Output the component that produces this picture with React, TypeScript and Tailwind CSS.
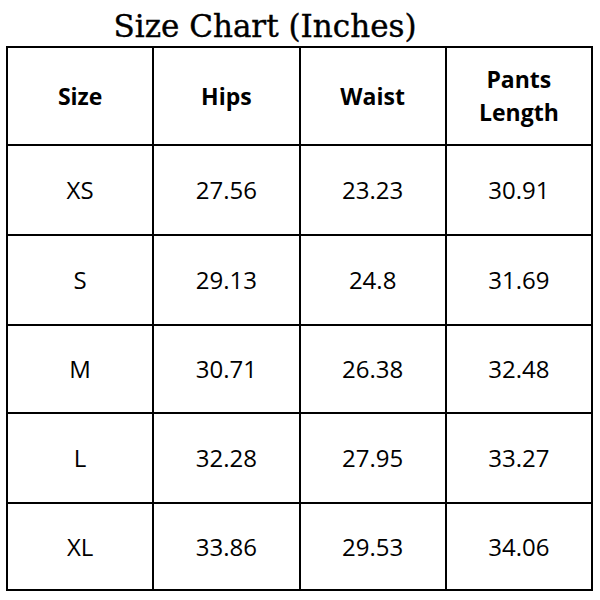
import React from "react";

const rows = [
  ["XS", "27.56", "23.23", "30.91"],
  ["S", "29.13", "24.8", "31.69"],
  ["M", "30.71", "26.38", "32.48"],
  ["L", "32.28", "27.95", "33.27"],
  ["XL", "33.86", "29.53", "34.06"],
];

const heights = ["h-[88px]", "h-[88px]", "h-[86px]", "h-[88px]", "h-[85px]"];

export default function App() {
  return (
    <div className="w-[600px] h-[600px] bg-white relative overflow-hidden">
      <div className="h-[46px] flex items-end">
        <div
          className="w-[530px] text-center text-[31px] leading-[40px] text-black [-webkit-text-stroke:0.4px_black]"
          style={{ fontFamily: '"DejaVu Serif", serif' }}
        >
          Size Chart (Inches)
        </div>
      </div>
      <div
        className="ml-[6px] w-[587px] bg-black p-[2px] grid grid-cols-4 gap-[2px] text-black"
        style={{ fontFamily: '"Open Sans", sans-serif' }}
      >
        {["Size", "Hips", "Waist"].map((h) => (
          <div key={h} className="bg-white h-[96px] flex items-center justify-center text-[23px] font-bold">
            {h}
          </div>
        ))}
        <div className="bg-white h-[96px] flex items-center justify-center text-center text-[23px] leading-[33px] font-bold">
          Pants
          <br />
          Length
        </div>
        {rows.map((r, i) =>
          r.map((c, j) => (
            <div key={i + "-" + j} className={`bg-white ${heights[i]} flex items-center justify-center text-[24px]`}>
              {c}
            </div>
          ))
        )}
      </div>
    </div>
  );
}
